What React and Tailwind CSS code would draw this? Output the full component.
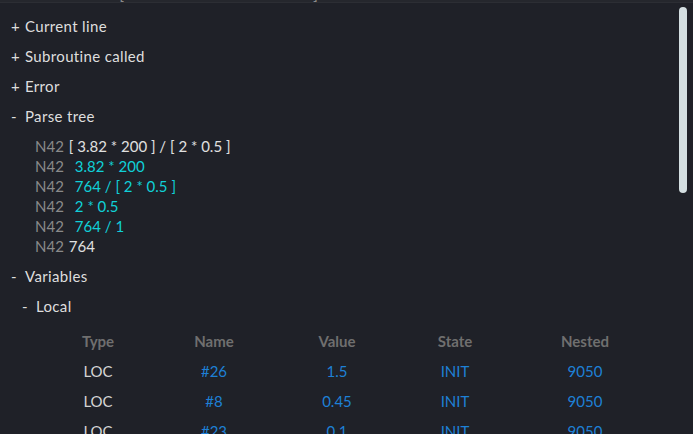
import React from "react";

const font = { fontFamily: "Lato, 'Noto Sans', sans-serif" };

function Section({ sign, label, indent = false }) {
  return (
    <div className={`flex items-center h-[30px] text-[15px] text-[#dedede] tracking-[0.35px] ${indent ? "pl-[22px]" : "pl-[11px]"}`}>
      <span className="w-[14px]">{sign}</span>
      <span>{label}</span>
    </div>
  );
}

const tree = [
  { parts: [["w", "[ 3.82 * 200 ] / [ 2 * 0.5 ]"]], gap: false },
  { parts: [["c", "3.82 * 200"]], gap: true },
  { parts: [["c", "764 / [ 2 * 0.5 ]"]], gap: true },
  { parts: [["c", "2 * 0.5"]], gap: true },
  { parts: [["c", "764 / 1"]], gap: true },
  { parts: [["w", "764"]], gap: false },
];

const rows = [
  ["LOC", "#26", "1.5", "INIT", "9050"],
  ["LOC", "#8", "0.45", "INIT", "9050"],
  ["LOC", "#23", "0.1", "INIT", "9050"],
];

const cols = ["w-[116px]", "w-[116px]", "w-[130px]", "w-[106px]", "w-[154px]"];

export default function App() {
  return (
    <div className="w-[693px] h-[434px] overflow-hidden bg-[#1f2128] flex flex-col" style={font}>
      <div className="h-[3px] overflow-hidden bg-[#25272d] border-b border-[#2c2e34] shrink-0">
        <div className="mt-[-13px] pl-[50px] text-[14px] leading-[16px] whitespace-nowrap" style={{ fontFamily: "'DejaVu Sans Mono', monospace" }}>
          <span className="text-[#8fd46a]">##</span>
          <span className="text-[#8a8a8a]">    </span>
          <span className="text-[#8fd46a]">####</span>
          <span className="text-[#8a8a8a]">  [ODBC CONNECT # COMMAND]</span>
        </div>
      </div>
      <div className="flex flex-1 min-h-0">
        <div className="flex-1 pt-[8px]">
          <Section sign="+" label="Current line" />
          <Section sign="+" label="Subroutine called" />
          <Section sign="+" label="Error" />
          <Section sign="-" label="Parse tree" />
          <div className="pl-[35px] py-[5px] text-[15px]">
            {tree.map((t, i) => (
              <div key={i} className="h-[20px] flex items-center whitespace-pre">
                <span className="text-[#8a8a8a]">N42</span>
                <span className={t.gap ? "ml-[11px]" : "ml-[5px]"}>
                  {t.parts.map(([c, s], j) => (
                    <span key={j} className={c === "c" ? "text-[#10d0d8]" : "text-[#e0e0e0]"}>{s}</span>
                  ))}
                </span>
              </div>
            ))}
          </div>
          <Section sign="-" label="Variables" />
          <Section sign="-" label="Local" indent />
          <div className="pl-[40px] pt-[5px] text-[15px]">
            <div className="flex h-[30px] items-center font-bold text-[#6f6f6f]">
              {["Type", "Name", "Value", "State", "Nested"].map((h, i) => (
                <div key={h} className={`${cols[i]} text-center`}>{h}</div>
              ))}
            </div>
            {rows.map((r, ri) => (
              <div key={ri} className="flex h-[30px] items-center">
                {r.map((v, i) => (
                  <div key={i} className={`${cols[i]} text-center ${i === 0 ? "text-[#d4d4d4]" : "text-[#1e80d6]"}`}>{v}</div>
                ))}
              </div>
            ))}
          </div>
        </div>
        <div className="w-[14px] shrink-0 pt-[4px] pr-[4px]">
          <div className="w-[8px] h-[186px] rounded-full bg-[#d4dfe2]" />
        </div>
      </div>
    </div>
  );
}
